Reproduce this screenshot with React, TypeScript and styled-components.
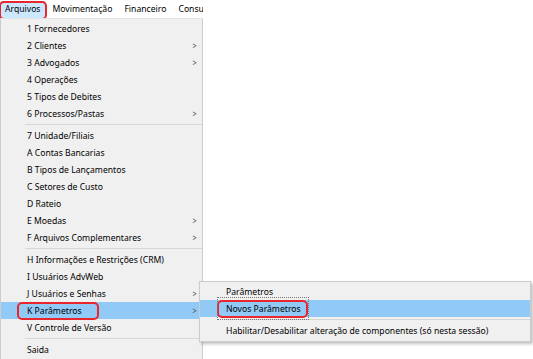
import * as React from 'react';
import styled, { createGlobalStyle, css } from 'styled-components';

const GlobalStyle = createGlobalStyle`
  html, body {
    margin: 0;
    padding: 0;
    background: #ffffff;
  }
  body {
    font-family: "Noto Sans", "Open Sans", sans-serif;
    font-size: 8.65px;
    color: #000000;
  }
`;

const Page = styled.div`
  position: relative;
  width: 533px;
  height: 359px;
  overflow: hidden;
  background: #ffffff;
`;

const MenuBar = styled.div`
  display: flex;
  flex-direction: row;
  align-items: center;
  height: 18px;
  width: 203px;
  overflow: hidden;
  white-space: nowrap;
  background: #ffffff;
`;

const BarItem = styled.span<{ $open?: boolean }>`
  position: relative;
  display: flex;
  align-items: center;
  height: 17px;
  padding: 0 5px;
  margin-right: 2px;
  background: ${p => (p.$open ? '#cce8ff' : 'transparent')};
  ${p =>
    p.$open &&
    css`
      &::after {
        content: '';
        position: absolute;
        left: -1px;
        right: -1px;
        top: 0;
        bottom: -2px;
        border: 2px solid #e8262b;
        border-radius: 5px;
      }
    `}
`;

const Dropdown = styled.div`
  width: 201px;
  border: 1px solid #cccccc;
  border-top-color: #e3e3e3;
  background: #f0f0f0;
  padding: 1px 0 2px;
`;

const Row = styled.div<{ $active?: boolean }>`
  position: relative;
  display: flex;
  align-items: center;
  height: 17px;
  padding-left: 26px;
  padding-right: 5px;
  white-space: nowrap;
  background: ${p => (p.$active ? '#91c9f7' : 'transparent')};
`;

// red call-out drawn around a label; offsets vary per use
const Label = styled.span<{ $marked?: boolean; $l?: number; $r?: number }>`
  position: relative;
  ${p =>
    p.$marked &&
    css`
      &::after {
        content: '';
        position: absolute;
        left: ${-(p.$l ?? 9)}px;
        right: ${-(p.$r ?? 9)}px;
        top: -3px;
        bottom: -3px;
        border: 2px solid #e8262b;
        border-radius: 5px;
      }
    `}
`;

const Arrow = styled.span`
  margin-left: auto;
  font-size: 9px;
  color: #444444;
  transform: scaleX(0.8);
`;

const Separator = styled.div`
  height: 1px;
  margin: 2px 0 2px 24px;
  background: #d7d7d7;
`;

const SubMenu = styled.div`
  position: absolute;
  left: 199px;
  top: 281px;
  width: 330px;
  border: 1px solid #cccccc;
  background: #f0f0f0;
  padding: 1px 0 2px;
  box-shadow: 2px 2px 3px rgba(0, 0, 0, 0.25);
`;

const FocusRect = styled.div`
  position: absolute;
  left: 17px;
  top: 15px;
  width: 90px;
  height: 21px;
  border: 1px dotted #7a7a7a;
  pointer-events: none;
`;

type Item = { label: string; sub?: boolean } | 'sep';

const items: Item[] = [
  { label: '1 Fornecedores' },
  { label: '2 Clientes', sub: true },
  { label: '3 Advogados', sub: true },
  { label: '4 Operações' },
  { label: '5 Tipos de Debites' },
  { label: '6 Processos/Pastas', sub: true },
  'sep',
  { label: '7 Unidade/Filiais' },
  { label: 'A Contas Bancarias' },
  { label: 'B Tipos de Lançamentos' },
  { label: 'C Setores de Custo' },
  { label: 'D Rateio' },
  { label: 'E Moedas', sub: true },
  { label: 'F Arquivos Complementares', sub: true },
  'sep',
  { label: 'H Informações e Restrições (CRM)' },
  { label: 'I Usuários AdvWeb' },
  { label: 'J Usuários e Senhas', sub: true },
  { label: 'K Parâmetros', sub: true },
  { label: 'V Controle de Versão' },
  'sep',
  { label: 'Saida' },
];

const ACTIVE = 'K Parâmetros';

export default function App() {
  return (
    <Page>
      <GlobalStyle />
      <MenuBar>
        <BarItem $open>Arquivos</BarItem>
        <BarItem>Movimentação</BarItem>
        <BarItem>Financeiro</BarItem>
        <BarItem>Consultas</BarItem>
      </MenuBar>
      <Dropdown>
        {items.map((it, i) =>
          it === 'sep' ? (
            <Separator key={i} />
          ) : (
            <Row key={i} $active={it.label === ACTIVE}>
              <Label $marked={it.label === ACTIVE} $l={10} $r={17}>
                {it.label}
              </Label>
              {it.sub && <Arrow>&gt;</Arrow>}
            </Row>
          )
        )}
      </Dropdown>
      <SubMenu>
        <Row>
          <Label>Parâmetros</Label>
        </Row>
        <Row $active>
          <Label $marked $l={9} $r={7}>
            Novos Parâmetros
          </Label>
        </Row>
        <Separator />
        <Row>
          <Label>Habilitar/Desabilitar alteração de componentes (só nesta sessão)</Label>
        </Row>
        <FocusRect />
      </SubMenu>
    </Page>
  );
}
